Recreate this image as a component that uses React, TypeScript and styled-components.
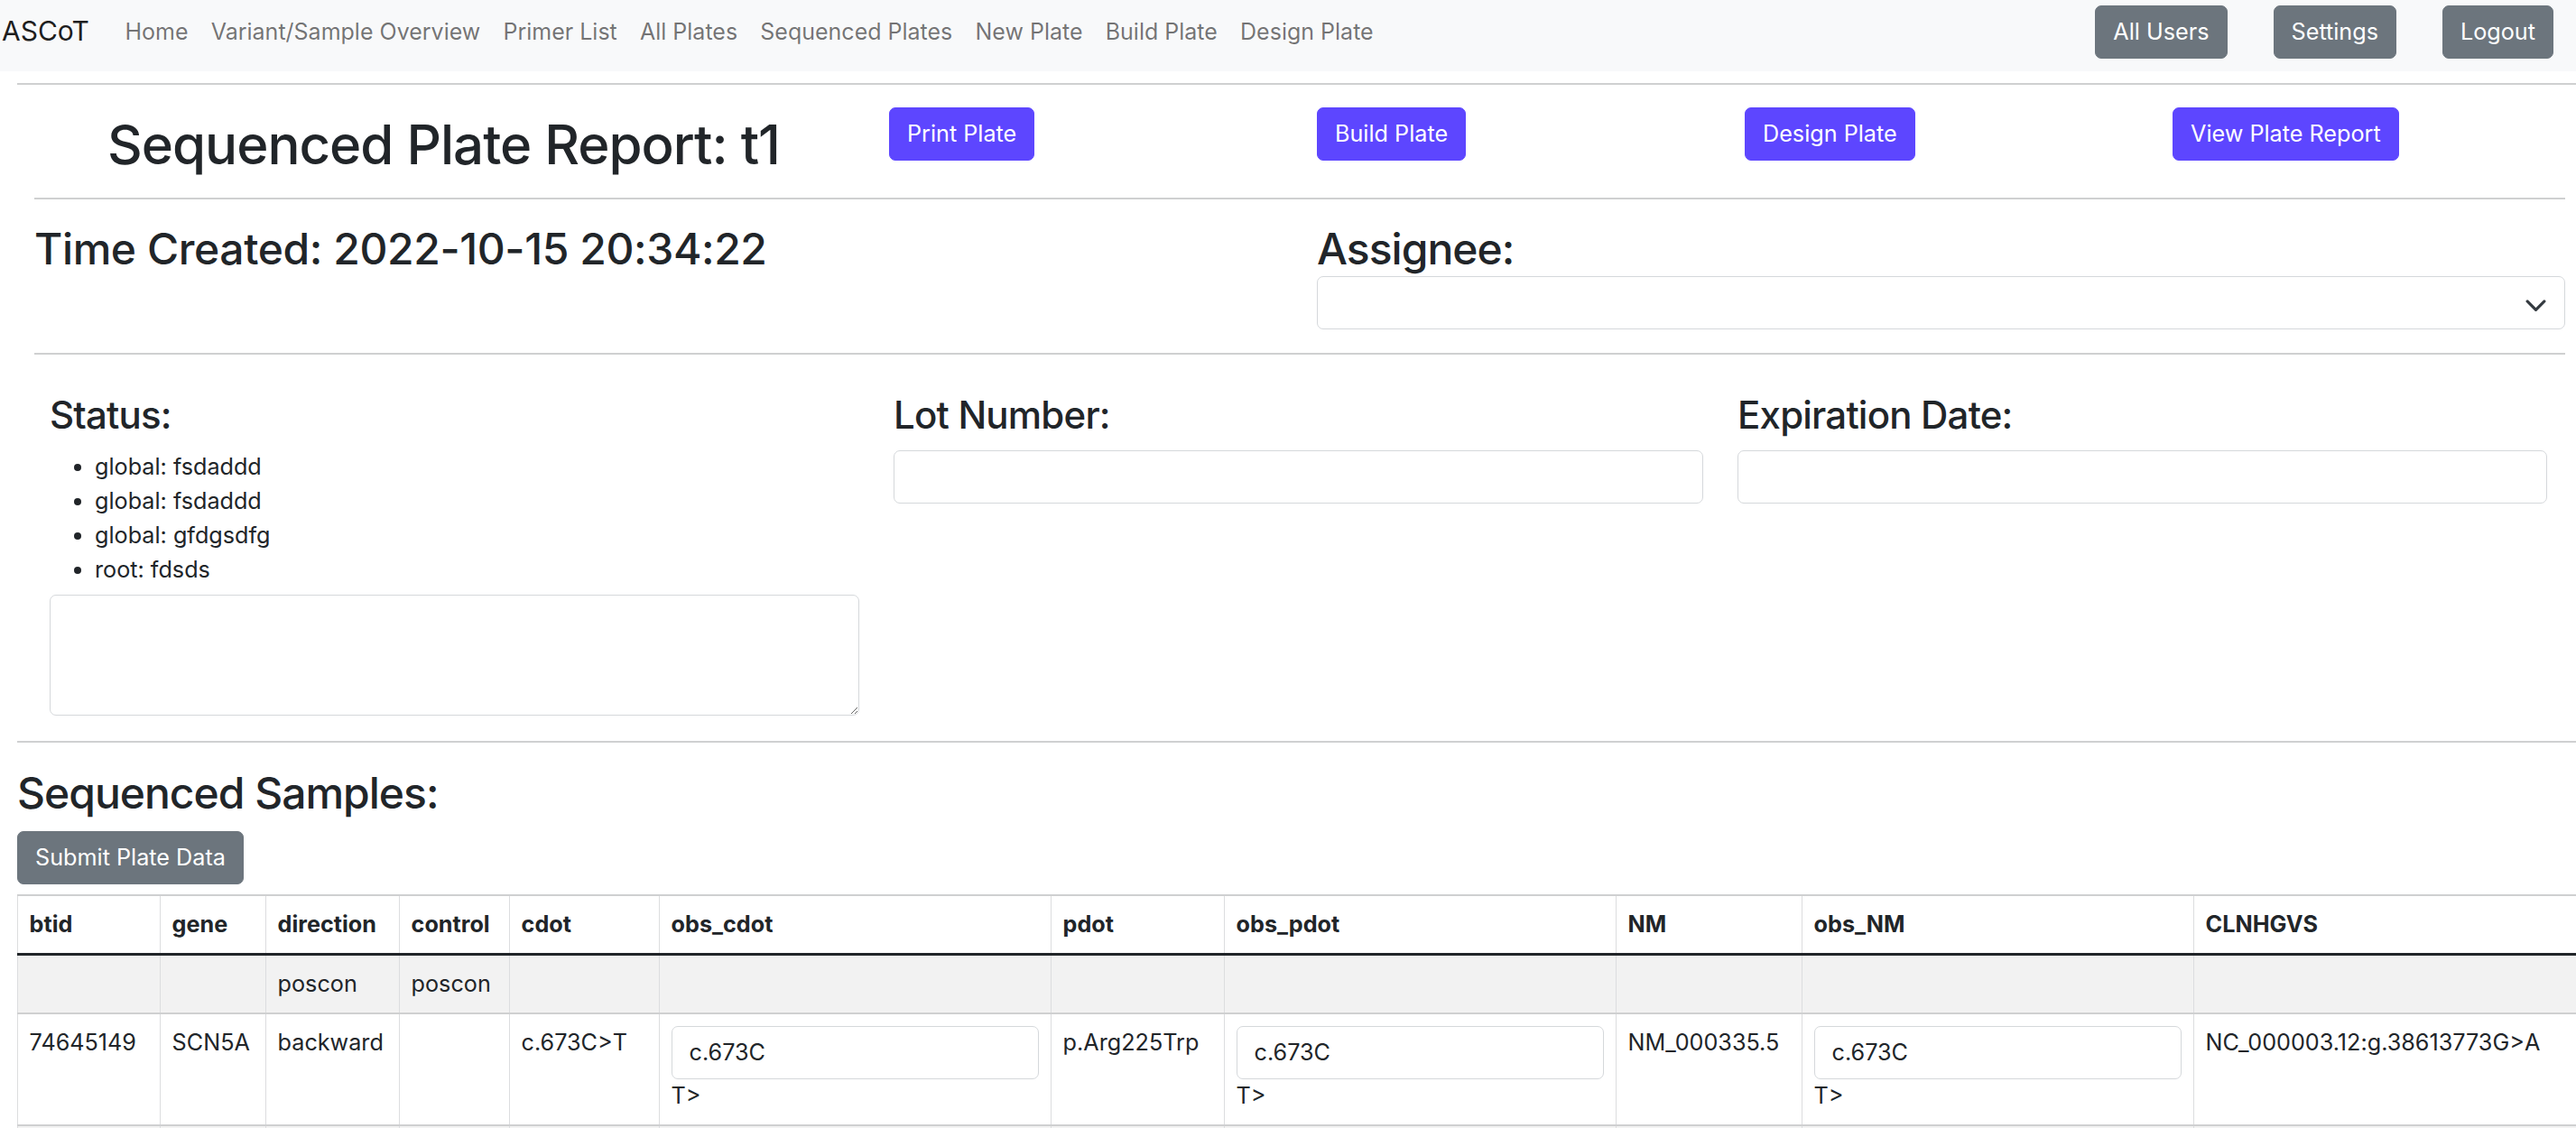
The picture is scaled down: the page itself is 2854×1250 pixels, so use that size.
import React from "react";
import styled, { createGlobalStyle } from "styled-components";

const GlobalStyle = createGlobalStyle`
  html, body { margin: 0; padding: 0; background: #fff; overflow-x: hidden; }
  body {
    font-family: Inter, "Noto Sans", "Liberation Sans", sans-serif;
    color: #212529;
    font-size: 25.2px;
    line-height: 1.5;
  }
  *, *::before, *::after { box-sizing: border-box; }
`;

const NavBar = styled.nav`
  display: flex;
  align-items: flex-start;
  height: 79px;
  background: #f8f9fa;
  padding: 4px 25px 0 2px;
`;

const Brand = styled.a`
  font-size: 30px;
  line-height: 1.5;
  padding-top: 8px;
  margin-right: 27px;
  color: rgba(0, 0, 0, 0.9);
  text-decoration: none;
  white-space: nowrap;
`;

const NavList = styled.ul`
  display: flex;
  list-style: none;
  margin: 0;
  padding: 0;
`;

const NavLink = styled.a`
  display: block;
  padding: 12.6px 12.6px;
  font-size: 25px;
  line-height: 37.8px;
  color: rgba(0, 0, 0, 0.55);
  text-decoration: none;
  white-space: nowrap;
`;

const NavRight = styled.div`
  margin-left: auto;
  display: flex;
  gap: 51px;
  padding-top: 2px;
`;

const Button = styled.button<{ $variant?: "primary" | "secondary" }>`
  font-family: inherit;
  font-size: 25.2px;
  line-height: 37.8px;
  padding: 9.5px 19px;
  border: 1.5px solid ${(p) => (p.$variant === "primary" ? "#5d46ff" : "#6c757d")};
  background: ${(p) => (p.$variant === "primary" ? "#5d46ff" : "#6c757d")};
  color: #fff;
  border-radius: 7px;
  white-space: nowrap;
  cursor: pointer;
`;

const Rule = styled.hr<{ $inset?: boolean; $top?: number }>`
  border: 0;
  border-top: 2px solid #cfd0d1;
  margin: ${(p) => p.$top ?? 0}px ${(p) => (p.$inset ? "12px" : "0")} 0
    ${(p) => (p.$inset ? "38px" : "19px")};
`;

const TitleRow = styled.section`
  display: grid;
  grid-template-columns: 947px 474px 474px 474px 1fr;
  align-items: start;
  margin-left: 38px;
  padding: 25px 0 0;
  height: 125px;
`;

const Title = styled.h1`
  margin: 5px 0 0;
  padding-right: 40px;
  text-align: center;
  font-size: 60px;
  letter-spacing: -1px;
  font-weight: 500;
  line-height: 72px;
  white-space: nowrap;
`;

const ButtonCell = styled.div`
  display: flex;
  align-items: flex-start;
`;

const MetaRow = styled.section`
  display: grid;
  grid-template-columns: 1421px 1fr;
  margin: 0 12px 0 38px;
  padding: 25px 0 26px;
`;

const H2 = styled.h2`
  margin: 0;
  font-size: 48px;
  letter-spacing: -1px;
  font-weight: 500;
  line-height: 60px;
  white-space: nowrap;
`;

const TimeHeading = styled(H2)`
  letter-spacing: -0.4px;
`;

const H3 = styled.h3`
  margin: 0 0 12.6px;
  font-size: 42px;
  letter-spacing: -0.8px;
  font-weight: 500;
  line-height: 52.8px;
  white-space: nowrap;
`;

const SelectBox = styled.div`
  display: flex;
  align-items: center;
  justify-content: flex-end;
  height: 59px;
  padding: 0 19px;
  border: 1.5px solid #d5d8db;
  border-radius: 7px;
  background: #fff;
  color: #343a40;
`;

const FieldsRow = styled.section`
  display: grid;
  grid-template-columns: repeat(3, 897px);
  column-gap: 38px;
  margin-left: 55px;
  padding: 41px 0 28px;
`;

const StatusList = styled.ul`
  margin: 0 0 8px;
  padding-left: 50px;
  line-height: 37.8px;
`;

const TextInput = styled.input`
  display: block;
  width: 100%;
  height: 59px;
  padding: 0 19px;
  font-family: inherit;
  font-size: 25.2px;
  color: #212529;
  border: 1.5px solid #d5d8db;
  border-radius: 7px;
  background: #fff;
`;

const NoteArea = styled.textarea`
  display: block;
  width: 100%;
  height: 134px;
  padding: 9px 19px;
  font-family: inherit;
  font-size: 25.2px;
  border: 1.5px solid #d5d8db;
  border-radius: 7px;
  resize: vertical;
`;

const SamplesSection = styled.section`
  padding: 26px 0 0 19px;
`;

const SamplesHeading = styled(H2)`
  margin-bottom: 12.6px;
`;

const TableWrap = styled.div`
  margin-top: 11px;
  overflow: hidden;
`;

const Table = styled.table`
  border-collapse: collapse;
  table-layout: fixed;
  width: 2871px;
  font-size: 25.2px;
  line-height: 37.8px;
`;

const Col = styled.col<{ $w: number }>`
  width: ${(p) => p.$w}px;
`;

const HeadRow = styled.tr`
  border-top: 2px solid #cfd0d1;
  border-bottom: 3px solid #212529;
`;

const BodyRow = styled.tr<{ $striped?: boolean }>`
  background: ${(p) => (p.$striped ? "#f2f2f2" : "#fff")};
  border-bottom: 2px solid #cfd0d1;
`;

const Th = styled.th`
  padding: 12.6px;
  text-align: left;
  font-weight: 700;
  vertical-align: top;
  border-left: 1px solid #dcdddf;
  border-right: 1px solid #dcdddf;
  white-space: nowrap;
`;

const Td = styled.td`
  padding: 12.6px;
  height: 63px;
  vertical-align: top;
  border-left: 1px solid #dcdddf;
  border-right: 1px solid #dcdddf;
  white-space: nowrap;
`;

const navItems = [
  "Home",
  "Variant/Sample Overview",
  "Primer List",
  "All Plates",
  "Sequenced Plates",
  "New Plate",
  "Build Plate",
  "Design Plate",
];

const columns: [string, number][] = [
  ["btid", 158],
  ["gene", 117],
  ["direction", 148],
  ["control", 122],
  ["cdot", 166],
  ["obs_cdot", 434],
  ["pdot", 192],
  ["obs_pdot", 434],
  ["NM", 206],
  ["obs_NM", 434],
  ["CLNHGVS", 460],
];

const statuses = ["global: fsdaddd", "global: fsdaddd", "global: gfdgsdfg", "root: fdsds"];

const Chevron = () => (
  <svg width="25" height="19" viewBox="0 0 16 12" fill="none">
    <path d="m2 5 6 6 6-6" stroke="#343a40" strokeWidth="2" strokeLinecap="round" strokeLinejoin="round" />
  </svg>
);

const ObsCell = ({ value, rest }: { value: string; rest: string }) => (
  <Td>
    <TextInput defaultValue={value} />
    {rest}
  </Td>
);

const EmptyCells = ({ count }: { count: number }) => (
  <>
    {Array.from({ length: count }, (_, i) => (
      <Td key={i} />
    ))}
  </>
);

export default function App() {
  return (
    <>
      <GlobalStyle />
      <NavBar>
        <Brand href="#">ASCoT</Brand>
        <NavList>
          {navItems.map((n) => (
            <li key={n}>
              <NavLink href="#">{n}</NavLink>
            </li>
          ))}
        </NavList>
        <NavRight>
          <Button $variant="secondary">All Users</Button>
          <Button $variant="secondary">Settings</Button>
          <Button $variant="secondary">Logout</Button>
        </NavRight>
      </NavBar>

      <Rule $top={13} />
      <TitleRow>
        <Title>Sequenced Plate Report: t1</Title>
        <ButtonCell>
          <Button $variant="primary">Print Plate</Button>
        </ButtonCell>
        <ButtonCell>
          <Button $variant="primary">Build Plate</Button>
        </ButtonCell>
        <ButtonCell>
          <Button $variant="primary">Design Plate</Button>
        </ButtonCell>
        <ButtonCell>
          <Button $variant="primary">View Plate Report</Button>
        </ButtonCell>
      </TitleRow>

      <Rule $inset />
      <MetaRow>
        <TimeHeading>Time Created: 2022-10-15 20:34:22</TimeHeading>
        <div>
          <H2>Assignee:</H2>
          <SelectBox>
            <Chevron />
          </SelectBox>
        </div>
      </MetaRow>

      <Rule $inset />
      <FieldsRow>
        <div>
          <H3>Status:</H3>
          <StatusList>
            {statuses.map((s, i) => (
              <li key={i}>{s}</li>
            ))}
          </StatusList>
          <NoteArea />
        </div>
        <div>
          <H3>Lot Number:</H3>
          <TextInput />
        </div>
        <div>
          <H3>Expiration Date:</H3>
          <TextInput />
        </div>
      </FieldsRow>

      <Rule />
      <SamplesSection>
        <SamplesHeading>Sequenced Samples:</SamplesHeading>
        <Button $variant="secondary">Submit Plate Data</Button>
        <TableWrap>
          <Table>
            <colgroup>
              {columns.map(([c, w]) => (
                <Col key={c} $w={w} />
              ))}
            </colgroup>
            <thead>
              <HeadRow>
                {columns.map(([c]) => (
                  <Th key={c}>{c}</Th>
                ))}
              </HeadRow>
            </thead>
            <tbody>
              <BodyRow $striped>
                <Td />
                <Td />
                <Td>poscon</Td>
                <Td>poscon</Td>
                <EmptyCells count={7} />
              </BodyRow>
              <BodyRow>
                <Td>74645149</Td>
                <Td>SCN5A</Td>
                <Td>backward</Td>
                <Td />
                <Td>c.673C&gt;T</Td>
                <ObsCell value="c.673C" rest="T>" />
                <Td>p.Arg225Trp</Td>
                <ObsCell value="c.673C" rest="T>" />
                <Td>NM_000335.5</Td>
                <ObsCell value="c.673C" rest="T>" />
                <Td>NC_000003.12:g.38613773G&gt;A</Td>
              </BodyRow>
              <BodyRow $striped>
                <EmptyCells count={11} />
              </BodyRow>
            </tbody>
          </Table>
        </TableWrap>
      </SamplesSection>
    </>
  );
}
